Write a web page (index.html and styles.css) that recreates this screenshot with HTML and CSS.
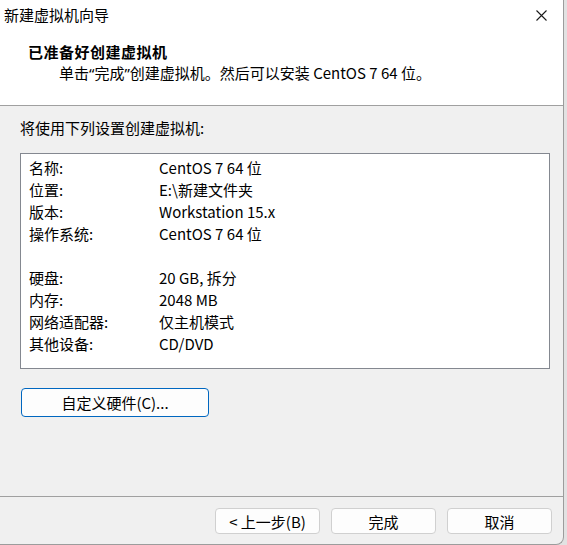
FILE: index.html
```html
<!DOCTYPE html>
<html lang="zh-CN">
<head>
    <meta charset="UTF-8">
    <meta name="viewport" content="width=device-width, initial-scale=1.0">
    <title>新建虚拟机向导</title>
    <link rel="stylesheet" href="styles.css">
</head>
<body>
    <div class="window">
        <div class="titlebar">
            <span class="title">新建虚拟机向导</span>
            <span class="close-button">
                <svg width="11" height="11" viewBox="0 0 11 11">
                    <path d="M0.5 0.5 L10.5 10.5 M10.5 0.5 L0.5 10.5" stroke="#1a1a1a" stroke-width="1.1" fill="none"/>
                </svg>
            </span>
        </div>

        <div class="header">
            <div class="heading">已准备好创建虚拟机</div>
            <div class="subtitle">单击<span class="quote">“</span>完成<span class="quote">”</span>创建虚拟机。然后可以安装 CentOS 7 64 位。</div>
        </div>

        <div class="content">
            <div class="intro">将使用下列设置创建虚拟机:</div>

            <div class="summary">
                <div class="row"><span class="label">名称:</span><span class="value">CentOS 7 64 位</span></div>
                <div class="row"><span class="label">位置:</span><span class="value">E:\新建文件夹</span></div>
                <div class="row"><span class="label">版本:</span><span class="value">Workstation 15.x</span></div>
                <div class="row"><span class="label">操作系统:</span><span class="value">CentOS 7 64 位</span></div>
                <div class="row"></div>
                <div class="row"><span class="label">硬盘:</span><span class="value">20 GB, 拆分</span></div>
                <div class="row"><span class="label">内存:</span><span class="value">2048 MB</span></div>
                <div class="row"><span class="label">网络适配器:</span><span class="value">仅主机模式</span></div>
                <div class="row"><span class="label">其他设备:</span><span class="value">CD/DVD</span></div>
            </div>

            <button class="custom-button">自定义硬件(C)...</button>
        </div>

        <div class="footer">
            <button class="footer-button">&lt; 上一步(B)</button>
            <button class="footer-button">完成</button>
            <button class="footer-button">取消</button>
        </div>
    </div>
</body>
</html>
```

FILE: styles.css
```css
body {
    margin: 0;
    background-color: #e2e2e2;
    font-family: "Noto Sans CJK SC", "Noto Sans", sans-serif;
    font-size: 15px;
    color: #000;
}
.window {
    width: 563px;
    height: 544px;
    background-color: #f0f0f0;
    border-right: 1px solid #9c9c9c;
    border-bottom: 1px solid #9c9c9c;
    border-bottom-right-radius: 8px;
    overflow: hidden;
    display: flex;
    flex-direction: column;
}
.titlebar {
    height: 30px;
    background-color: white;
    display: flex;
    align-items: center;
    justify-content: space-between;
    padding: 0 16px 0 4px;
}
.title {
    line-height: 30px;
}
.close-button {
    display: flex;
    align-items: center;
}
.header {
    background-color: white;
    border-bottom: 1px solid #a0a0a0;
    padding: 11px 0 21px 28px;
}
.heading {
    font-weight: bold;
    line-height: 21px;
    letter-spacing: 0.5px;
}
.subtitle {
    line-height: 21px;
    padding-left: 31px;
}
.quote {
    font-family: "Noto Sans", sans-serif;
}
.content {
    flex-grow: 1;
    padding: 11px 13px 0 20px;
    border-bottom: 1px solid #a0a0a0;
}
.intro {
    line-height: 22px;
    margin-bottom: 14px;
}
.summary {
    background-color: white;
    border: 1px solid #848890;
    padding: 3px 8px 13px;
}
.row {
    display: flex;
    height: 22px;
    line-height: 22px;
}
.label {
    width: 130px;
}
.custom-button {
    display: block;
    margin: 19px 0 0 1px;
    width: 188px;
    height: 29px;
    background-color: #fdfdfd;
    border: 1px solid #0067c0;
    border-radius: 4px;
    font-family: inherit;
    font-size: 15px;
    color: #000;
    padding: 0;
}
.footer {
    height: 47px;
    display: flex;
    justify-content: flex-end;
    align-items: flex-start;
    gap: 11px;
    padding: 11px 11px 0 0;
    box-sizing: border-box;
}
.footer-button {
    width: 105px;
    height: 26px;
    background-color: #fdfdfd;
    border: 1px solid #d0d0d0;
    border-radius: 4px;
    font-family: inherit;
    font-size: 15px;
    color: #000;
    padding: 0;
}
```
